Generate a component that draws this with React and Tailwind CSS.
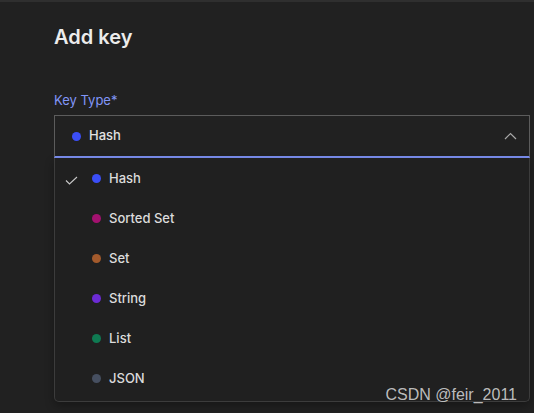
import React from "react";

const types = [
  { name: "Hash", color: "bg-[#3b4ef7]" },
  { name: "Sorted Set", color: "bg-[#a3116f]" },
  { name: "Set", color: "bg-[#a35a2c]" },
  { name: "String", color: "bg-[#6c2bd4]" },
  { name: "List", color: "bg-[#0f7a52]" },
  { name: "JSON", color: "bg-[#464f60]" },
];

function Check() {
  return (
    <svg width="13" height="9" viewBox="0 0 13 9" fill="none">
      <polyline points="1,4.5 4.5,8 12,1" stroke="#c8c8c8" strokeWidth="1.1" />
    </svg>
  );
}

function ChevronUp() {
  return (
    <svg width="13" height="8" viewBox="0 0 13 8" fill="none">
      <polyline points="1,7 6.5,1.5 12,7" stroke="#a8a8a8" strokeWidth="1.2" />
    </svg>
  );
}

export default function App() {
  const selected = "Hash";

  return (
    <div
      className="relative h-[413px] overflow-hidden bg-[#212121] border-t-2 border-[#2f2f2f] pl-[54px] pr-[4px]"
      style={{ fontFamily: "Inter, 'Noto Sans', sans-serif" }}
    >
      <h1 className="pt-[21px] text-[20px] leading-[28px] font-semibold text-[#ececec]">
        Add key
      </h1>

      <div className="mt-[41px] text-[13px] leading-[16px] text-[#8196f7]">Key Type*</div>

      <div className="mt-[7px] flex h-[43px] items-center border border-b-2 border-[#5c5c5c] border-b-[#7b8ef0] pl-[17px] pr-[12px]">
        <span className="h-[9px] w-[9px] rounded-full bg-[#3b4ef7]" />
        <span className="ml-[8px] text-[13px] font-medium text-[#e2e2e2]">{selected}</span>
        <span className="ml-auto flex">
          <ChevronUp />
        </span>
      </div>

      <div className="rounded-b-[5px] border-x border-b border-[#3c3c3c] bg-[#202020] pb-[3px] shadow-[0_4px_10px_rgba(0,0,0,0.3)]">
        {types.map((t) => (
          <div key={t.name} className="flex h-[40px] items-center pl-[10px] pt-[1px]">
            <span className="flex w-[13px] pt-[4px]">{t.name === selected && <Check />}</span>
            <span className={`ml-[14px] h-[9px] w-[9px] rounded-full ${t.color}`} />
            <span className="ml-[8px] text-[13px] font-medium text-[#dcdcdc]">{t.name}</span>
          </div>
        ))}
      </div>

      <div
        className="absolute right-[17px] top-[384px] text-[16px] leading-[18px] text-[#d0d0d0]/90"
        style={{ fontFamily: "'Liberation Sans', Arial, sans-serif" }}
      >
        CSDN @feir_2011
      </div>
    </div>
  );
}
